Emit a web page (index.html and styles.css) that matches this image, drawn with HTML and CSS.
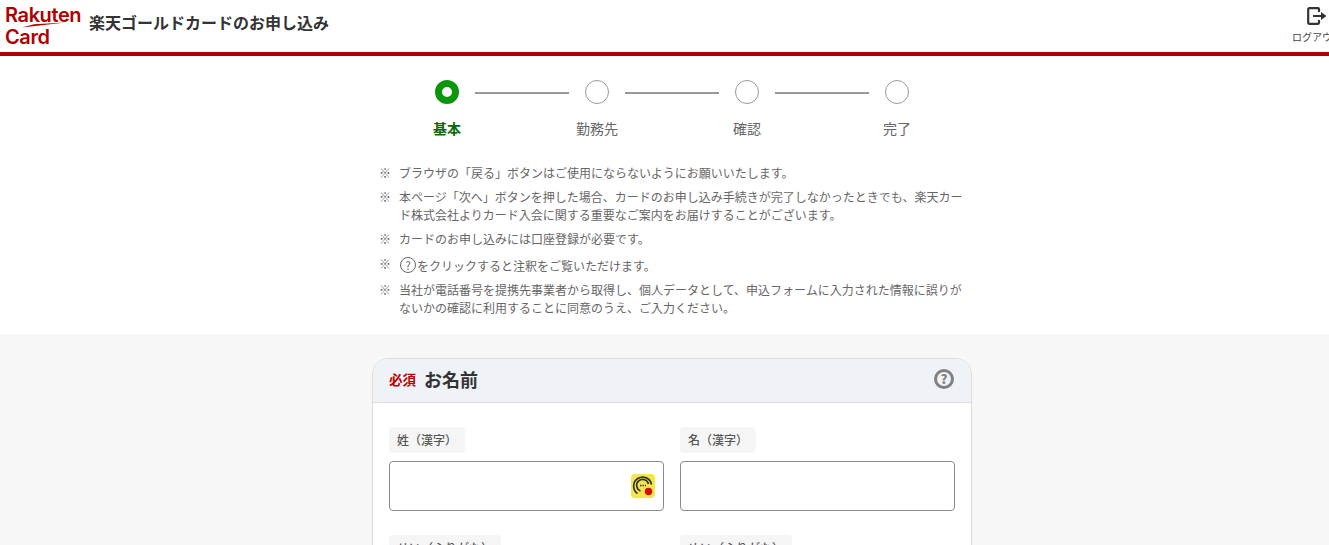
FILE: index.html
```html
<!DOCTYPE html>
<html lang="ja">
<head>
    <meta charset="UTF-8">
    <meta name="viewport" content="width=device-width, initial-scale=1.0">
    <title>楽天ゴールドカードのお申し込み</title>
    <link rel="stylesheet" href="styles.css">
</head>
<body>
    <div class="page">
        <header class="header">
            <div class="logo">
                <span class="logo-word">Rakuten</span>
                <svg class="logo-swoosh" width="44" height="6" viewBox="0 0 44 6"><path d="M0 5.500 L43.500 0.500 L12 2.200 Z" fill="#b00000"/></svg>
                <span class="logo-word">Card</span>
            </div>
            <h1 class="header-title">楽天ゴールドカードのお申し込み</h1>
            <a class="logout">
                <svg width="20" height="18" viewBox="0 0 20 18"><path d="M12 5 V2.200 a1 1 0 0 0 -1 -1 H2.200 a1 1 0 0 0 -1 1 V15.800 a1 1 0 0 0 1 1 H11 a1 1 0 0 0 1 -1 V13" fill="none" stroke="#333" stroke-width="2.200"/><path d="M6 8 H14 V5 L19.500 9 L14 13 V10 H6 Z" fill="#333"/></svg>
                <span>ログアウト</span>
            </a>
        </header>

        <section class="intro">
            <div class="stepper">
                <div class="step-marks">
                    <span class="circle circle-active"></span>
                    <span class="line"></span>
                    <span class="circle"></span>
                    <span class="line"></span>
                    <span class="circle"></span>
                    <span class="line"></span>
                    <span class="circle"></span>
                </div>
                <div class="step-labels">
                    <span class="step-label step-label-active">基本</span>
                    <span class="step-label">勤務先</span>
                    <span class="step-label">確認</span>
                    <span class="step-label">完了</span>
                </div>
            </div>

            <ul class="notes">
                <li>ブラウザの「戻る」ボタンはご使用にならないようにお願いいたします。</li>
                <li>本ページ「次へ」ボタンを押した場合、カードのお申し込み手続きが完了しなかったときでも、楽天カード株式会社よりカード入会に関する重要なご案内をお届けすることがございます。</li>
                <li>カードのお申し込みには口座登録が必要です。</li>
                <li class="note-help"><span class="help-small">?</span>をクリックすると注釈をご覧いただけます。</li>
                <li>当社が電話番号を提携先事業者から取得し、個人データとして、申込フォームに入力された情報に誤りがないかの確認に利用することに同意のうえ、ご入力ください。</li>
            </ul>
        </section>

        <main class="form-area">
            <div class="card">
                <div class="card-head">
                    <span class="required">必須</span>
                    <h2 class="card-title">お名前</h2>
                    <span class="help-big">?</span>
                </div>
                <div class="card-body">
                    <div class="field">
                        <label class="chip">姓（漢字）</label>
                        <div class="input">
                            <svg class="input-icon" width="24" height="24" viewBox="0 0 24 24">
                                <rect width="24" height="24" rx="4" fill="#f6e44e"/>
                                <path d="M6.500 19.500 A9 9 0 1 1 20.500 10.500" fill="none" stroke="#333" stroke-width="1.700"/>
                                <path d="M9.500 17 A6 6 0 1 1 17.500 10" fill="none" stroke="#333" stroke-width="1.700"/>
                                <path d="M9 11.500 H15" stroke="#333" stroke-width="1.400" stroke-dasharray="1.500 1"/>
                                <circle cx="17.500" cy="17.500" r="3.700" fill="#d40d00"/>
                            </svg>
                        </div>
                    </div>
                    <div class="field">
                        <label class="chip">名（漢字）</label>
                        <div class="input"></div>
                    </div>
                    <div class="field">
                        <label class="chip">せい（ふりがな）</label>
                        <div class="input"></div>
                    </div>
                    <div class="field">
                        <label class="chip">めい（ふりがな）</label>
                        <div class="input"></div>
                    </div>
                </div>
            </div>
        </main>
    </div>
</body>
</html>
```
FILE: styles.css
```css
html, body {
    margin: 0;
    padding: 0;
    height: 545px;
    overflow: hidden;
    background-color: #fff;
}

body {
    font-family: "Noto Sans CJK JP", "Noto Sans", sans-serif;
    color: #333;
}

.page {
    width: 1344px;
}

.header {
    display: flex;
    align-items: center;
    height: 52px;
    border-bottom: 4px solid #b00000;
    padding: 0 2px 0 5px;
}

.logo {
    position: relative;
    display: flex;
    flex-direction: column;
    width: 84px;
    font-family: Inter, "Liberation Sans", sans-serif;
    font-weight: 600;
    color: #b00000;
}

.logo-word {
    font-size: 20px;
    line-height: 22px;
    letter-spacing: -0.4px;
}

.logo-swoosh {
    position: absolute;
    left: 17px;
    top: 18px;
}

.header-title {
    flex: 1;
    margin: 0 0 9px;
    font-size: 16px;
    font-weight: 700;
    line-height: 24px;
}

.logout {
    display: flex;
    flex-direction: column;
    align-items: center;
    width: 50px;
    margin-bottom: 2px;
    font-size: 10px;
    line-height: 14px;
    color: #444;
    gap: 5px;
}

.intro {
    padding: 24px 0 0;
    height: 278px;
    box-sizing: border-box;
}

.stepper {
    width: 600px;
    margin: 0 auto;
}

.step-marks {
    display: flex;
    align-items: center;
    padding: 0 63px;
}

.circle {
    width: 24px;
    height: 24px;
    box-sizing: border-box;
    flex: none;
    border: 1px solid #999;
    border-radius: 50%;
    background-color: #fff;
}

.circle-active {
    border: 7px solid #0c960c;
    background-color: #fff;
}

.line {
    flex: 1;
    height: 2px;
    margin: 1px 16px 0;
    background-color: #999;
}

.step-labels {
    display: grid;
    grid-template-columns: repeat(4, 150px);
    margin-top: 14px;
}

.step-label {
    font-size: 14px;
    line-height: 20px;
    text-align: center;
    color: #666;
}

.step-label-active {
    font-weight: 700;
    color: #0a6b0a;
}

.notes {
    list-style: none;
    width: 600px;
    margin: 26px auto 0;
    padding: 0;
    display: flex;
    flex-direction: column;
    gap: 6px;
}

.notes li {
    position: relative;
    padding: 0 8px 0 27px;
    font-size: 12px;
    line-height: 18px;
    color: #666;
}

.notes li::before {
    content: "※";
    position: absolute;
    left: 7px;
    top: 0;
}

.note-help {
    height: 20px;
    margin-top: 1px;
    display: flex;
    align-items: flex-end;
}

.help-small {
    display: inline-block;
    width: 16px;
    height: 16px;
    box-sizing: border-box;
    margin: 0 1px 2px 1px;
    border: 1px solid #666;
    border-radius: 50%;
    font-size: 11px;
    line-height: 14px;
    text-align: center;
    color: #666;
}

.form-area {
    height: 300px;
    padding-top: 24px;
    box-sizing: border-box;
    background-color: #f7f7f7;
}

.card {
    width: 600px;
    box-sizing: border-box;
    margin: 0 auto;
    border: 1px solid #dcdcdc;
    border-radius: 16px;
    background-color: #fff;
    overflow: hidden;
}

.card-head {
    display: flex;
    align-items: center;
    height: 40px;
    padding: 0 17px 3px 16px;
    border-bottom: 1px solid #dcdcdc;
    background-color: #eff3f8;
}

.required {
    font-size: 13.500px;
    font-weight: 700;
    color: #bf0000;
    margin-right: 8px;
}

.card-title {
    flex: 1;
    margin: 0;
    font-size: 18px;
    font-weight: 700;
    line-height: 24px;
}

.help-big {
    width: 20px;
    height: 20px;
    box-sizing: border-box;
    border: 3px solid #808080;
    border-radius: 50%;
    font-size: 13px;
    font-weight: 900;
    line-height: 14px;
    text-align: center;
    color: #808080;
}

.card-body {
    display: grid;
    grid-template-columns: 275px 275px;
    column-gap: 16px;
    row-gap: 24px;
    padding: 24px 16px;
}

.field {
    display: flex;
    flex-direction: column;
    align-items: flex-start;
    gap: 8px;
}

.chip {
    padding: 4px 8px;
    border-radius: 4px;
    background-color: #f5f5f5;
    font-size: 12px;
    font-weight: 500;
    line-height: 18px;
    color: #555;
}

.input {
    display: flex;
    align-items: center;
    justify-content: flex-end;
    width: 100%;
    height: 50px;
    box-sizing: border-box;
    padding-right: 8px;
    border: 1px solid #8c8c8c;
    border-radius: 4px;
    background-color: #fff;
}
```
